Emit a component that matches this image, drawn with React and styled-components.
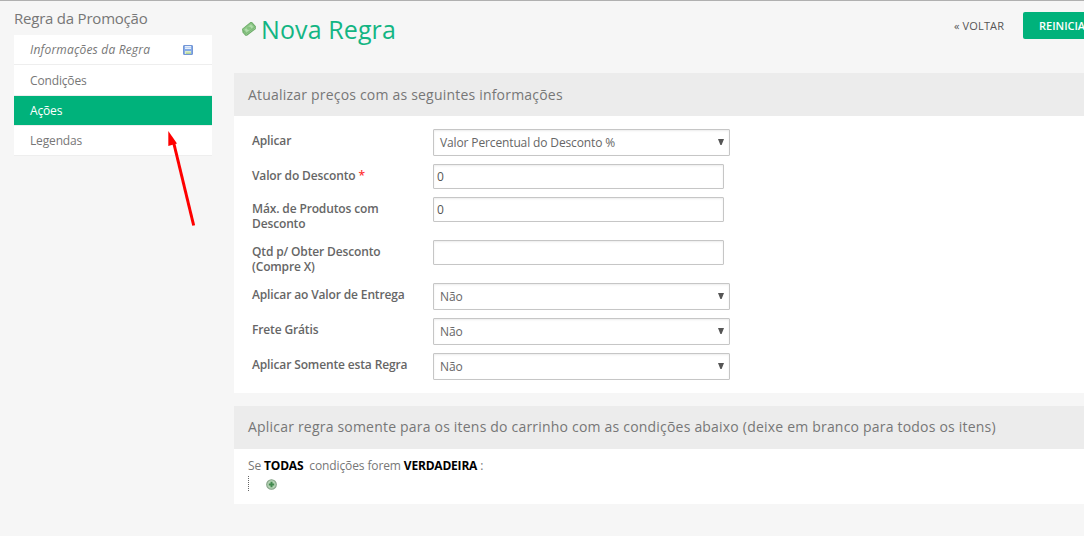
import React from 'react';
import styled, { createGlobalStyle } from 'styled-components';

const GlobalStyle = createGlobalStyle`
    * {
        box-sizing: border-box;
    }
    body {
        margin: 0;
        background: #f6f6f6;
        font-family: "Open Sans", sans-serif;
        font-size: 12px;
        color: #666;
        overflow: hidden;
    }
`;

const fields = [
    { label: 'Aplicar', type: 'select', value: 'Valor Percentual do Desconto %' },
    { label: 'Valor do Desconto', type: 'text', value: '0', required: true },
    { label: 'Máx. de Produtos com Desconto', type: 'text', value: '0' },
    { label: 'Qtd p/ Obter Desconto (Compre X)', type: 'text', value: '' },
    { label: 'Aplicar ao Valor de Entrega', type: 'select', value: 'Não' },
    { label: 'Frete Grátis', type: 'select', value: 'Não' },
    { label: 'Aplicar Somente esta Regra', type: 'select', value: 'Não' },
];

function SaveIcon() {
    return <svg width="10" height="10" viewBox="0 0 10 10">
        <rect x="0.5" y="0.5" width="9" height="9" rx="0.5" fill="#86abe6" stroke="#7396d6" />
        <rect x="2" y="1" width="6" height="3" fill="#e6effb" />
        <rect x="2" y="2" width="6" height="0.8" fill="#b8cff0" />
        <rect x="2" y="6" width="6" height="3" fill="#dcebc8" />
        <rect x="3" y="7.6" width="5" height="1.2" fill="#a9cf8c" />
    </svg>;
}

function MoneyIcon() {
    return <svg width="16" height="16" viewBox="0 0 16 16">
        <path d="M1 8 L9.5 1 L11 1 L14.8 5.2 L14.8 8 L6 14.8 L4.4 14.8 L1.6 11.4 Z" fill="#69a964" />
        <path d="M1.6 8.2 L10.2 1.6 L14.2 6 L5.2 12.8 Z" fill="#8fc98a" stroke="#7cb877" strokeWidth="0.7" />
        <path d="M3.6 8.4 L10 3.4 L12.2 6 L5.6 11.2 Z" fill="#b1dcab" />
        <ellipse cx="7.9" cy="7.3" rx="2.2" ry="1.8" fill="#86c380" />
        <path d="M2.4 10.6 L5 13.7 L14.2 7" fill="none" stroke="#a5d5a0" strokeWidth="0.7" />
    </svg>;
}

function AddIcon() {
    return <svg width="11" height="11" viewBox="0 0 11 11">
        <circle cx="5.5" cy="5.5" r="4.8" fill="#b5d3b5" stroke="#85a287" strokeWidth="1.1" />
        <path d="M5.5 2.8 V8.2 M2.8 5.5 H8.2" stroke="#42894e" strokeWidth="2" />
    </svg>;
}

export default function App() {
    return <Page>
        <GlobalStyle />
        <SideBar>
            <SideTitle>Regra da Promoção</SideTitle>
            <Tabs>
                <Tab $changed>Informações da Regra<SaveIcon /></Tab>
                <Tab>Condições</Tab>
                <Tab $active>Ações</Tab>
                <Tab>Legendas</Tab>
            </Tabs>
        </SideBar>
        <Main>
            <Header>
                <Title><MoneyIcon /><span>Nova Regra</span></Title>
                <Actions>
                    <BackButton>« VOLTAR</BackButton>
                    <ResetButton>REINICIAR</ResetButton>
                </Actions>
            </Header>
            <Card>
                <CardHead>Atualizar preços com as seguintes informações</CardHead>
                <Form>
                    {fields.map((field) => <Row key={field.label}>
                        <Label>{field.label}{field.required && <em> *</em>}</Label>
                        {field.type === 'select'
                            ? <Select><span>{field.value}</span><Caret viewBox="0 0 6 6"><path d="M0 0 H6 L3.6 6 H2.4 Z" /></Caret></Select>
                            : <Input defaultValue={field.value} />}
                    </Row>)}
                </Form>
            </Card>
            <Card>
                <CardHead $line={41}>Aplicar regra somente para os itens do carrinho com as condições abaixo (deixe em branco para todos os itens)</CardHead>
                <Rules>
                    <Sentence>Se <b>TODAS</b>&nbsp; condições forem <b>VERDADEIRA</b> :</Sentence>
                    <Branch><AddIcon /></Branch>
                </Rules>
            </Card>
        </Main>
        <Arrow width="32" height="98" viewBox="0 0 32 98">
            <path d="M8.5 12 L28.7 95.5" stroke="#fe0000" strokeWidth="3" />
            <path d="M3.3 1 L12 13.6 L3.3 16 Z" fill="#fe0000" />
        </Arrow>
    </Page>;
}

const Page = styled.div`
    position: relative;
    width: 1084px;
    height: 536px;
    display: flex;
    gap: 22px;
    padding-left: 14px;
    overflow: hidden;
    border-top: 1px solid #b0b0b0;
    background: #f6f6f6;
`;

const SideBar = styled.div`
    flex: none;
    width: 198px;
    padding-top: 7px;
`;

const SideTitle = styled.div`
    height: 27px;
    line-height: 21px;
    font-size: 15px;
    letter-spacing: -0.22px;
    color: #777;
    white-space: nowrap;
`;

const Tabs = styled.div`
    display: flex;
    flex-direction: column;
`;

const Tab = styled.div`
    display: flex;
    align-items: center;
    justify-content: space-between;
    height: ${(props) => (props.$changed || props.$active ? 30 : 31)}px;
    padding: 0 19px 0 16px;
    border-bottom: 1px solid #eee;
    background: ${(props) => (props.$active ? '#00b27b' : '#fff')};
    background-clip: padding-box;
    color: ${(props) => (props.$active ? '#fff' : '#777')};
    font-size: 12px;
    font-style: ${(props) => (props.$changed ? 'italic' : 'normal')};
    letter-spacing: ${(props) => (props.$changed ? '0.18px' : '-0.15px')};
    &:last-child {
        height: 30px;
    }
`;

const Main = styled.div`
    flex: none;
    width: 1000px;
`;

const Header = styled.div`
    display: flex;
    justify-content: space-between;
    height: 72px;
`;

const Title = styled.div`
    display: flex;
    gap: 4px;
    padding: 10px 0 0 7px;
    height: 60px;
    font-size: 25px;
    letter-spacing: 0.1px;
    line-height: 36px;
    color: #13b583;
    svg {
        margin-top: 10px;
    }
`;

const Actions = styled.div`
    display: flex;
    align-items: flex-start;
    gap: 18px;
    width: 280px;
    padding-top: 11px;
    font-size: 11px;
    line-height: 27px;
`;

const BackButton = styled.div`
    width: 51px;
    color: #555;
    letter-spacing: 0.15px;
    white-space: nowrap;
`;

const ResetButton = styled.div`
    height: 27px;
    padding: 0 16px;
    border-radius: 2px;
    background: #00b27b;
    color: #fff;
    font-weight: 600;
`;

const Card = styled.div`
    background: #fff;
    margin-bottom: 13px;
`;

const CardHead = styled.div`
    height: 43px;
    padding-left: 14px;
    background: #ececec;
    color: #777;
    font-size: 14px;
    letter-spacing: 0.2px;
    line-height: ${(props) => props.$line || 43}px;
    white-space: nowrap;
`;

const Form = styled.div`
    display: flex;
    flex-direction: column;
    gap: 8px;
    padding: 13px 18px;
`;

const Row = styled.div`
    display: grid;
    grid-template-columns: 181px 297px;
    align-items: start;
`;

const Label = styled.label`
    width: 165px;
    padding: 4px 0 1px;
    font-size: 12px;
    line-height: 15px;
    font-weight: 600;
    letter-spacing: -0.14px;
    color: #666;
    em {
        color: #f33;
        font-style: normal;
    }
`;

const Input = styled.input`
    width: 291px;
    height: 25px;
    padding: 0 3px;
    border: 1px solid #c6c6c6;
    border-radius: 1px;
    outline: none;
    box-shadow: inset 0 1px 2px rgba(0, 0, 0, 0.08);
    font: 12px "Open Sans", sans-serif;
    color: #555;
`;

const Select = styled.div`
    display: flex;
    justify-content: space-between;
    width: 297px;
    height: 27px;
    padding: 0 5px 0 6px;
    border: 1px solid #c6c6c6;
    border-radius: 1px;
    box-shadow: inset 0 1px 2px rgba(0, 0, 0, 0.08);
    line-height: 26px;
    letter-spacing: -0.13px;
    color: #666;
`;

const Caret = styled.svg`
    width: 6px;
    height: 6px;
    margin-top: 9px;
    fill: #555;
`;

const Rules = styled.div`
    height: 55px;
    padding: 8px 14px;
`;

const Sentence = styled.div`
    height: 19px;
    line-height: 17px;
    letter-spacing: -0.12px;
    color: #777;
    white-space: nowrap;
    b {
        color: #000;
        font-weight: 700;
        letter-spacing: -0.2px;
    }
`;

const Branch = styled.div`
    display: flex;
    align-items: flex-end;
    height: 15px;
    padding: 0 0 1px 17px;
    border-left: 1px dotted #666;
`;

/* callout drawn over the tabs */
const Arrow = styled.svg`
    position: absolute;
    left: 165px;
    top: 129px;
`;
